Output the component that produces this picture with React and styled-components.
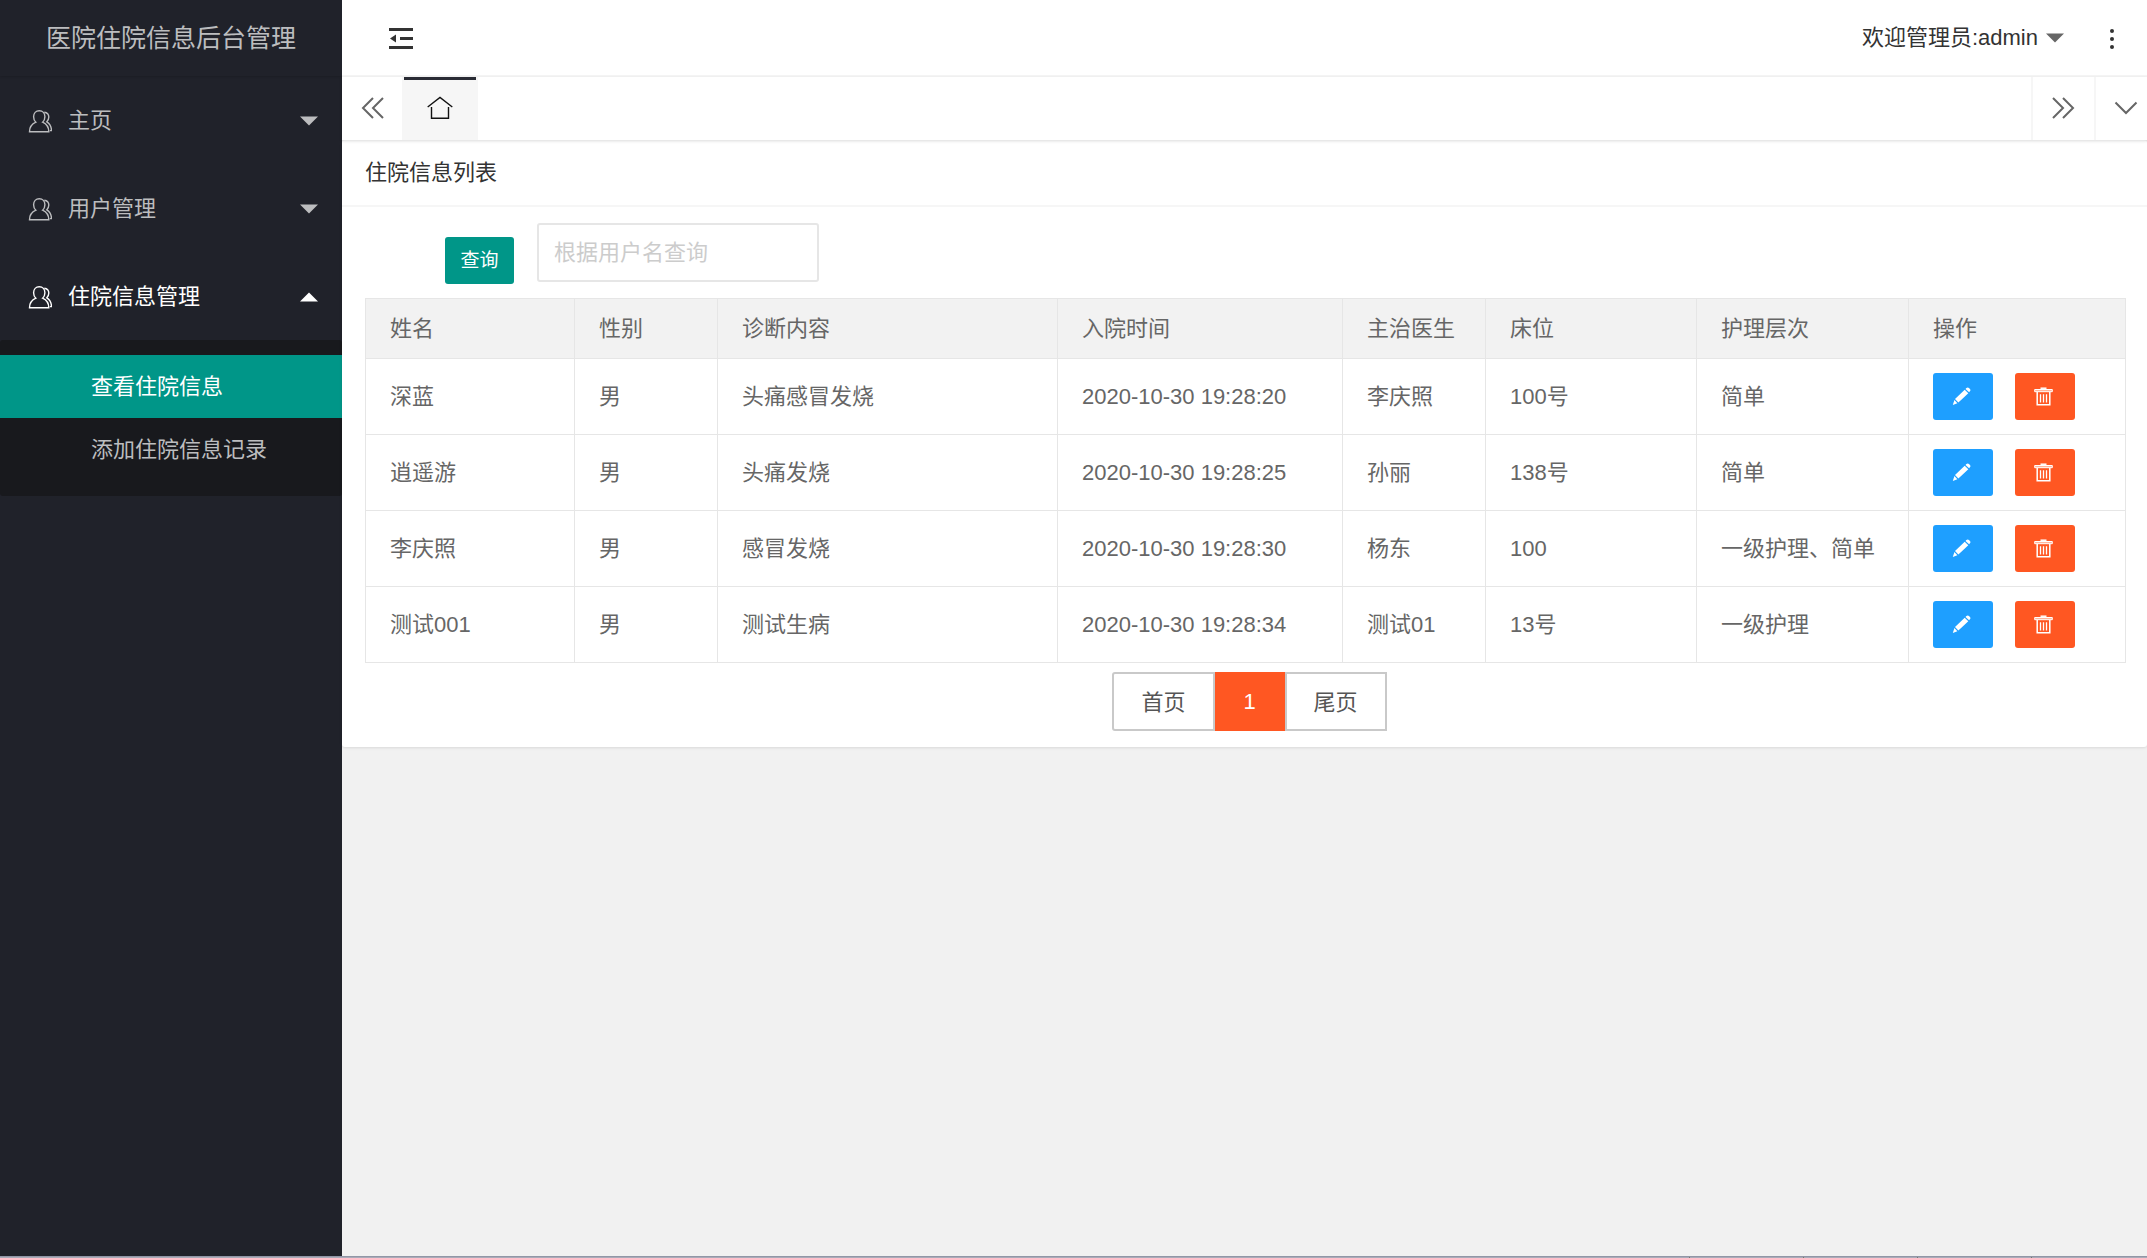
import styled, { createGlobalStyle } from "styled-components";

const GlobalStyle = createGlobalStyle`
  * {
    box-sizing: border-box;
  }

  body {
    margin: 0;
    background: #f1f1f1;
    color: #333;
    font-family: "Liberation Sans", "Noto Sans CJK SC", sans-serif;
    font-size: 22px;
    line-height: 32px;
  }

  button,
  input {
    font: inherit;
    margin: 0;
  }

  button {
    border: none;
    background: none;
    color: inherit;
    padding: 0;
    cursor: pointer;
  }

  a {
    color: inherit;
    text-decoration: none;
  }
`;

const Screen = styled.div`
  display: flex;
  flex-direction: column;
  min-height: 100vh;
`;

const Layout = styled.div`
  display: flex;
  flex: 1;
`;

const Sidebar = styled.aside`
  flex: 0 0 342px;
  background: #20222a;
  color: #bcbdbf;
`;

const Logo = styled.div`
  height: 76px;
  font-size: 25px;
  line-height: 76px;
  text-align: center;
  box-shadow: 0 1px 2px rgba(0, 0, 0, 0.15);
`;

const NavGroup = styled.button`
  display: flex;
  align-items: center;
  width: 100%;
  height: 88px;
  padding: 2px 24px 0 28px;
  color: ${(props) => (props.$open ? "#fff" : "#bcbdbf")};
`;

const NavLabel = styled.span`
  flex: 1;
  padding-left: 16px;
  text-align: left;
`;

const SubNav = styled.div`
  padding: 15px 0;
  background: #18191d;
  border-radius: 3px;
`;

const SubLink = styled.a`
  display: block;
  height: 63px;
  padding-left: 91px;
  line-height: 63px;
  color: ${(props) => (props.$active ? "#fff" : "#bcbdbf")};
  background: ${(props) => (props.$active ? "#009688" : "transparent")};
`;

const Main = styled.main`
  flex: 1;
  min-width: 0;
`;

const Header = styled.header`
  display: flex;
  align-items: center;
  justify-content: space-between;
  height: 77px;
  padding: 2px 33px 0 46px;
  background: #fff;
  border-bottom: 2px solid #f6f6f6;
`;

const HeaderRight = styled.div`
  display: flex;
  align-items: center;
  gap: 46px;
`;

const UserButton = styled.button`
  display: flex;
  align-items: center;
  gap: 8px;
  padding-bottom: 2px;

  svg {
    color: #666;
  }
`;

const IconButton = styled.button`
  display: flex;
  align-items: center;
  justify-content: center;
`;

const TabBar = styled.div`
  display: flex;
  height: 63px;
  background: #fff;
  box-shadow: 0 1px 3px rgba(0, 0, 0, 0.15);
  position: relative;
`;

const TabControl = styled(IconButton)`
  flex: 0 0 ${(props) => props.$width}px;
  padding-bottom: 2px;
  border-left: ${(props) => (props.$divided ? "2px solid #f6f6f6" : "none")};
`;

const MoreControl = styled(TabControl)`
  padding-left: 8px;
`;

const HomeTab = styled(IconButton)`
  width: 76px;
  padding-bottom: 2px;
  background: #f6f6f6;
  border: solid #f6f6f6;
  border-width: 0 2px;
  background-image: linear-gradient(#292b34, #292b34);
  background-size: 100% 3px;
  background-repeat: no-repeat;
`;

const TabSpace = styled.div`
  flex: 1;
`;

const Card = styled.section`
  background: #fff;
  border-radius: 3px;
  box-shadow: 0 1px 3px rgba(0, 0, 0, 0.1);
`;

const CardTitle = styled.h1`
  height: 67px;
  margin: 0;
  padding: 0 23px;
  border-bottom: 2px solid #f6f6f6;
  font-size: 22px;
  font-weight: 400;
  line-height: 65px;
`;

const CardBody = styled.div`
  padding: 16px 21px 16px 23px;
`;

const SearchForm = styled.form`
  display: flex;
  align-items: flex-end;
  gap: 23px;
  padding: 0 0 14px 80px;
`;

const SearchButton = styled.button`
  width: 69px;
  height: 47px;
  border-radius: 3px;
  background: #009688;
  color: #fff;
  font-size: 19px;
`;

const SearchInput = styled.input`
  width: 282px;
  height: 59px;
  margin-bottom: 2px;
  padding: 0 15px;
  border: 2px solid #e6e6e6;
  border-radius: 3px;
  background: #fff;
  outline: none;

  &::placeholder {
    color: #ccc;
    opacity: 1;
  }
`;

const Table = styled.table`
  width: 100%;
  table-layout: fixed;
  border-collapse: collapse;
  color: #666;

  th,
  td {
    border: 1px solid #e6e6e6;
    padding: 0 24px;
    text-align: left;
    font-weight: 400;
  }

  th {
    height: 60px;
    background: #f2f2f2;
  }

  td {
    height: 76px;
  }
`;

const Actions = styled.div`
  display: flex;
  gap: 22px;
`;

const ActionButton = styled(IconButton)`
  width: 60px;
  height: 47px;
  padding-right: 4px;
  border-radius: 3px;
  background: ${(props) => (props.$danger ? "#ff5722" : "#1e9fff")};
`;

const Pager = styled.nav`
  display: flex;
  justify-content: center;
  padding: 9px 0 0 8px;
  color: #555;
`;

const PageLink = styled.a`
  height: 59px;
  padding: 0 27px;
  border: 2px solid #c9c9c9;
  line-height: 57px;

  &:first-child {
    border-radius: 3px 0 0 3px;
  }
`;

const CurrentPage = styled.span`
  width: 70px;
  height: 59px;
  background: #ff5722;
  color: #fff;
  line-height: 59px;
  text-align: center;
`;

const BottomStrip = styled.div`
  display: flex;
  justify-content: flex-end;
  height: 2px;
  padding-right: 2px;
  background: #a9abb8;
  border-top: 1px solid #9296a6;
`;

const StripCell = styled.div`
  width: 114px;
  border-left: 1px solid #77776f;
`;

const UserIcon = () => (
  <svg width="24" height="24" viewBox="0 0 24 24" fill="none" stroke="currentColor" strokeWidth="1.4">
    <path d="M1.5 22.8h19.3c0-5-1.600-7.500-6.200-9.600 1.600-1.300 2.300-3.100 2.300-5.400 0-3.600-2.200-6-5.600-6s-5.700 2.400-5.700 6c0 2.300.7 4.100 2.300 5.400-4.700 2.100-6.400 4.600-6.400 9.600z" />
    <path d="M16.300 3.200c3 .4 4.500 2.400 4.500 4.900 0 2-.7 3.500-2 4.700 3.200 1.800 4.600 4.500 4.700 8.800h-1.700" />
  </svg>
);

const Caret = ({ up }) => (
  <svg width="18" height="10" viewBox="0 0 18 10" fill="currentColor">
    <path d={up ? "M0 9.500h18L9 .5z" : "M0 .5h18L9 9.500z"} />
  </svg>
);

const FoldIcon = () => (
  <svg width="25" height="23" viewBox="0 0 25 23" fill="#333">
    <path d="M1 1h24v3H1zM12 10h13v3H12zM1 19h24v3H1zM2 11.500l6-4v8z" />
  </svg>
);

const DotsIcon = () => (
  <svg width="4" height="20" viewBox="0 0 4 20" fill="#333">
    <circle cx="2" cy="2" r="2" />
    <circle cx="2" cy="10" r="2" />
    <circle cx="2" cy="18" r="2" />
  </svg>
);

const DoubleArrow = ({ right }) => (
  <svg width="24" height="22" viewBox="0 0 24 22" fill="none" stroke="#666" strokeWidth="2">
    <path
      d={
        right
          ? "M1 1l10 10L1 21M11 1l10 10-10 10"
          : "M13 1L3 11l10 10M23 1L13 11l10 10"
      }
    />
  </svg>
);

const DownIcon = () => (
  <svg width="24" height="14" viewBox="0 0 24 14" fill="none" stroke="#666" strokeWidth="2">
    <path d="M1.500 1.500L12 12 22.500 1.500" />
  </svg>
);

const HomeIcon = () => (
  <svg width="26" height="24" viewBox="0 0 26 24" fill="none" stroke="#111" strokeWidth="1.400">
    <path d="M.7 11L13 1.500 25.300 11M4.500 11v11.300h17V11" />
  </svg>
);

const PencilIcon = () => (
  <svg width="19" height="19" viewBox="0 0 19 19" fill="#fff">
    <path d="M12.700 2.700l3.600 3.600-9.900 9.300L3 12.100zM13.500 1.900l.9-.9c.8-.8 1.800-.8 2.600 0l.9.900c.8.8.7 1.700 0 2.400l-.8.900zM2.400 13.100l3 3.100L.8 18z" />
  </svg>
);

const TrashIcon = () => (
  <svg width="19" height="19" viewBox="0 0 19 19" fill="none" stroke="#fff">
    <path d="M6.500 1.200h6" strokeWidth="1.500" />
    <path d="M.7 2.500h17.600v2.200H.7z" fill="#ffb59d" strokeWidth="1" />
    <path d="M3.200 5v12.700h12.600V5" strokeWidth="1.500" />
    <path d="M6.500 7.200v8.300M9.500 7.200v8.300M12.500 7.200v8.300" strokeWidth="1.300" />
  </svg>
);

const menus = [
  { name: "主页" },
  { name: "用户管理" },
  {
    name: "住院信息管理",
    children: [
      { name: "查看住院信息", active: true },
      { name: "添加住院信息记录" },
    ],
  },
];

const columns = [
  { title: "姓名", width: 209 },
  { title: "性别", width: 143 },
  { title: "诊断内容", width: 340 },
  { title: "入院时间", width: 285 },
  { title: "主治医生", width: 143 },
  { title: "床位", width: 211 },
  { title: "护理层次", width: 212 },
  { title: "操作", width: 217 },
];

const patients = [
  ["深蓝", "男", "头痛感冒发烧", "2020-10-30 19:28:20", "李庆照", "100号", "简单"],
  ["逍遥游", "男", "头痛发烧", "2020-10-30 19:28:25", "孙丽", "138号", "简单"],
  ["李庆照", "男", "感冒发烧", "2020-10-30 19:28:30", "杨东", "100", "一级护理、简单"],
  ["测试001", "男", "测试生病", "2020-10-30 19:28:34", "测试01", "13号", "一级护理"],
];

const App = () => {
  return (
    <Screen>
      <GlobalStyle />
      <Layout>
        <Sidebar>
          <Logo>医院住院信息后台管理</Logo>
          <nav>
            {menus.map((menu) => (
              <div key={menu.name}>
                <NavGroup type="button" $open={!!menu.children}>
                  <UserIcon />
                  <NavLabel>{menu.name}</NavLabel>
                  <Caret up={!!menu.children} />
                </NavGroup>
                {menu.children && (
                  <SubNav>
                    {menu.children.map((item) => (
                      <SubLink href="#" key={item.name} $active={item.active}>
                        {item.name}
                      </SubLink>
                    ))}
                  </SubNav>
                )}
              </div>
            ))}
          </nav>
        </Sidebar>
        <Main>
          <Header>
            <IconButton type="button" aria-label="侧边伸缩">
              <FoldIcon />
            </IconButton>
            <HeaderRight>
              <UserButton type="button">
                欢迎管理员:admin
                <Caret />
              </UserButton>
              <IconButton type="button" aria-label="更多">
                <DotsIcon />
              </IconButton>
            </HeaderRight>
          </Header>
          <TabBar>
            <TabControl type="button" aria-label="向左" $width={60}>
              <DoubleArrow />
            </TabControl>
            <HomeTab type="button" aria-label="主页">
              <HomeIcon />
            </HomeTab>
            <TabSpace />
            <TabControl type="button" aria-label="向右" $width={63} $divided>
              <DoubleArrow right />
            </TabControl>
            <MoreControl type="button" aria-label="展开" $width={53} $divided>
              <DownIcon />
            </MoreControl>
          </TabBar>
          <Card>
            <CardTitle>住院信息列表</CardTitle>
            <CardBody>
              <SearchForm>
                <SearchButton type="button">查询</SearchButton>
                <SearchInput aria-label="用户名" placeholder="根据用户名查询" />
              </SearchForm>
              <Table>
                <colgroup>
                  {columns.map((column) => (
                    <col key={column.title} width={column.width} />
                  ))}
                </colgroup>
                <thead>
                  <tr>
                    {columns.map((column) => (
                      <th key={column.title}>{column.title}</th>
                    ))}
                  </tr>
                </thead>
                <tbody>
                  {patients.map((patient) => (
                    <tr key={patient[0]}>
                      {patient.map((value, index) => (
                        <td key={index}>{value}</td>
                      ))}
                      <td>
                        <Actions>
                          <ActionButton type="button" aria-label="编辑">
                            <PencilIcon />
                          </ActionButton>
                          <ActionButton type="button" aria-label="删除" $danger>
                            <TrashIcon />
                          </ActionButton>
                        </Actions>
                      </td>
                    </tr>
                  ))}
                </tbody>
              </Table>
              <Pager>
                <PageLink href="#">首页</PageLink>
                <CurrentPage>1</CurrentPage>
                <PageLink href="#">尾页</PageLink>
              </Pager>
            </CardBody>
          </Card>
        </Main>
      </Layout>
      <BottomStrip>
        <StripCell />
        <StripCell />
        <StripCell />
        <StripCell />
      </BottomStrip>
    </Screen>
  );
};

export default App;
